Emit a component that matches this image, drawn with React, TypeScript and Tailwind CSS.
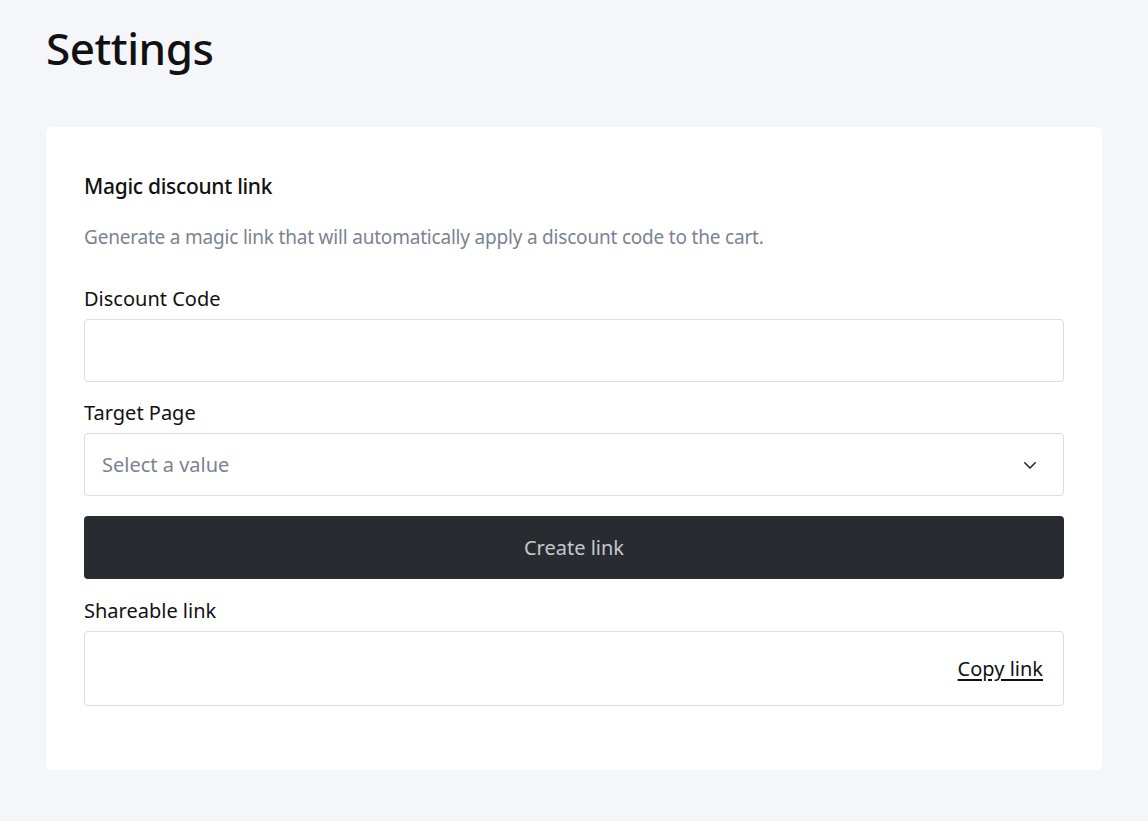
export default function App() {
  return (
    <div className="min-h-[821px] bg-[#f5f6fa] px-[46px] pt-[22px] pb-[51px] font-['Inter',sans-serif] text-[#111]">
      <h1 className="text-[44px] font-medium leading-[52px] tracking-[-0.5px]">Settings</h1>
      <section className="mt-[53px] rounded-[6px] bg-white px-[38px] pt-[44px] pb-[64px]">
        <h2 className="text-[21px] font-medium leading-[30px] tracking-[-0.3px]">Magic discount link</h2>
        <p className="mt-[24px] text-[19px] leading-[24px] text-[#7a8391] tracking-[-0.2px]">
          Generate a magic link that will automatically apply a discount code to the cart.
        </p>
        <label className="mt-[37px] block text-[20px] leading-[26px]">Discount Code</label>
        <div className="mt-[7px] h-[63px] rounded-[4px] border border-[#d9dce1]"></div>
        <label className="mt-[18px] block text-[20px] leading-[26px]">Target Page</label>
        <div className="mt-[7px] flex h-[63px] items-center justify-between rounded-[4px] border border-[#d9dce1] pl-[17px] pr-[24px]">
          <span className="text-[20px] text-[#7a8391]">Select a value</span>
          <svg width="18" height="18" viewBox="0 0 24 24" fill="none" stroke="#222" strokeWidth="2" strokeLinecap="round" strokeLinejoin="round">
            <path d="M5 9l7 7 7-7" />
          </svg>
        </div>
        <button className="mt-[20px] flex h-[63px] w-full items-center justify-center rounded-[4px] bg-[#282c31] text-[20px] text-[#c4c8ce]">
          Create link
        </button>
        <label className="mt-[19px] block text-[20px] leading-[26px]">Shareable link</label>
        <div className="mt-[7px] flex h-[75px] items-center justify-end rounded-[4px] border border-[#d9dce1] pr-[20px]">
          <span className="text-[20px] underline underline-offset-[3px]">Copy link</span>
        </div>
      </section>
    </div>
  );
}
